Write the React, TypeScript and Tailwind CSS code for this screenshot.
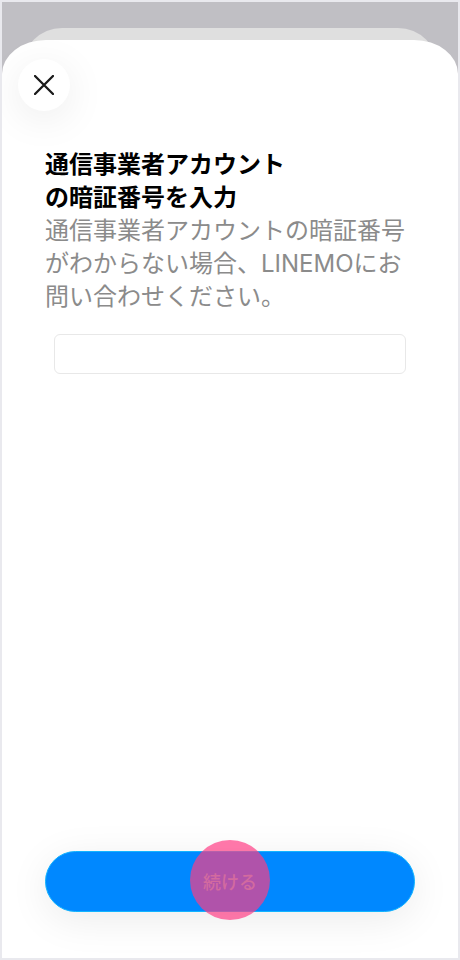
import { useState } from "react";

function CloseButton() {
  return (
    <button
      type="button"
      aria-label="閉じる"
      className="flex size-[52px] items-center justify-center rounded-full bg-white shadow-[0_8px_40px_rgba(0,0,0,0.08)]"
    >
      <svg width="20" height="20" viewBox="0 0 20 20" fill="none" stroke="#1a1a1a" strokeWidth="2.3" strokeLinecap="round" aria-hidden="true">
        <path d="M1 1L19 19M19 1L1 19" />
      </svg>
    </button>
  );
}

function ContinueButton() {
  return (
    <div className="relative mx-[43px]">
      <button
        type="submit"
        className="h-[61px] w-full rounded-full border border-[#12b4ff] bg-[#0088ff] pt-0.5 text-lg font-medium text-[#70d0dc] shadow-[0_8px_40px_rgba(0,0,0,0.08)]"
      >
        続ける
      </button>
      <span
        aria-hidden="true"
        className="pointer-events-none absolute -top-[11px] left-1/2 size-20 -translate-x-1/2 rounded-full bg-[rgba(255,60,132,0.69)]"
      />
    </div>
  );
}

export default function App() {
  const [pin, setPin] = useState("");

  return (
    <div className="flex min-h-screen flex-col overflow-hidden border-2 border-[#e9e9ee] bg-[#c0bfc4] pt-[26px] font-['Inter','Noto_Sans_CJK_JP',sans-serif]">
      <div className="mx-5 -mb-7 h-10 rounded-t-[40px] bg-[#dfdfdf]" />
      <form
        onSubmit={(event) => event.preventDefault()}
        className="flex grow flex-col rounded-t-[44px_34px] bg-white pt-[19px] pb-[46px]"
      >
        <div className="px-4">
          <CloseButton />
        </div>
        <div className="mt-[37px] px-[43px] text-2xl/[33px]">
          <h1 className="font-bold text-black">
            通信事業者アカウント
            <br />
            の暗証番号を入力
          </h1>
          <p id="pin-help" className="text-[#8b8b8b]">
            通信事業者アカウントの暗証番号がわからない場合、LINEMOにお問い合わせください。
          </p>
        </div>
        <div className="mx-[52px] mt-[21px]">
          <input
            type="password"
            aria-label="暗証番号"
            aria-describedby="pin-help"
            value={pin}
            onChange={(event) => setPin(event.target.value)}
            className="block h-10 w-full rounded-md border border-[#e8e8e8] bg-white px-3 text-lg"
          />
        </div>
        <div className="mt-auto pt-10">
          <ContinueButton />
        </div>
      </form>
    </div>
  );
}
